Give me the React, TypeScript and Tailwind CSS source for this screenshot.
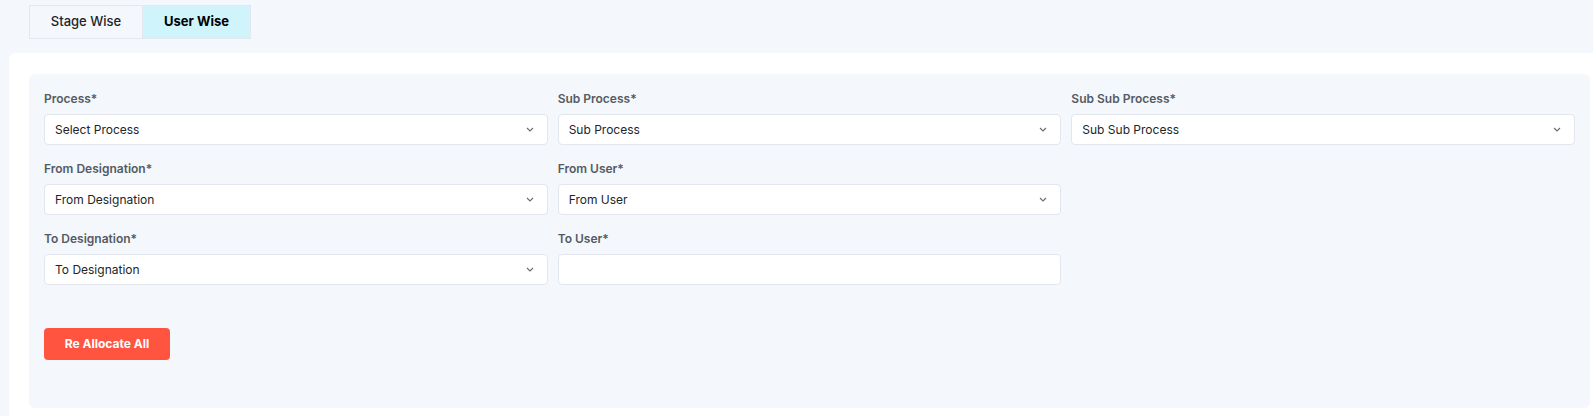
import React from "react";

const Chevron = () => (
  <svg width="8" height="5" viewBox="0 0 8 5" fill="none" className="shrink-0">
    <path d="M1 1l3 3 3-3" stroke="#6b6b6b" strokeWidth="1.1" />
  </svg>
);

type FieldProps = { label: string; value?: string; chevron?: boolean };

const Field = ({ label, value, chevron = true }: FieldProps) => (
  <div className="flex flex-col">
    <label className="h-[20px] text-[12px] leading-[20px] font-semibold text-[#555b62] mb-[5px]">
      {label}
    </label>
    <div className="h-[31px] bg-white border border-[#e3e6ec] rounded-[4px] flex items-center justify-between pl-[10px] pr-[13px]">
      <span className="text-[12px] text-[#212529]">{value}</span>
      {chevron && <Chevron />}
    </div>
  </div>
);

export default function App() {
  return (
    <div
      className="min-h-[416px] bg-[#f4f7fc] pt-[5px] pl-[9px] overflow-hidden"
      style={{ fontFamily: "Inter, 'Noto Sans', sans-serif" }}
    >
      <div className="flex ml-[20px] h-[34px]">
        <button className="w-[114px] h-full border border-[#e4e7ee] bg-[#f4f7fc] text-[13px] text-[#212529] font-medium">
          Stage Wise
        </button>
        <button className="w-[108px] h-full border border-l-0 border-[#e4e7ee] bg-[#cff4fc] text-[13px] text-black font-bold">
          User Wise
        </button>
      </div>
      <div className="mt-[14px] bg-white rounded-tl-[6px] pl-[20px] pt-[21px] pr-[3px] pb-[8px]">
        <div className="bg-[#f4f7fc] rounded-[6px] pt-[15px] px-[15px] pb-[48px]">
          <div className="grid grid-cols-3 gap-x-[10px] gap-y-[14px]">
            <Field label="Process*" value="Select Process" />
            <Field label="Sub Process*" value="Sub Process" />
            <Field label="Sub Sub Process*" value="Sub Sub Process" />
            <Field label="From Designation*" value="From Designation" />
            <Field label="From User*" value="From User" />
            <div />
            <Field label="To Designation*" value="To Designation" />
            <Field label="To User*" chevron={false} />
            <div />
          </div>
          <button className="mt-[43px] w-[126px] h-[32px] rounded-[4px] bg-[#ff5540] text-white text-[12px] font-bold">
            Re Allocate All
          </button>
        </div>
      </div>
    </div>
  );
}
